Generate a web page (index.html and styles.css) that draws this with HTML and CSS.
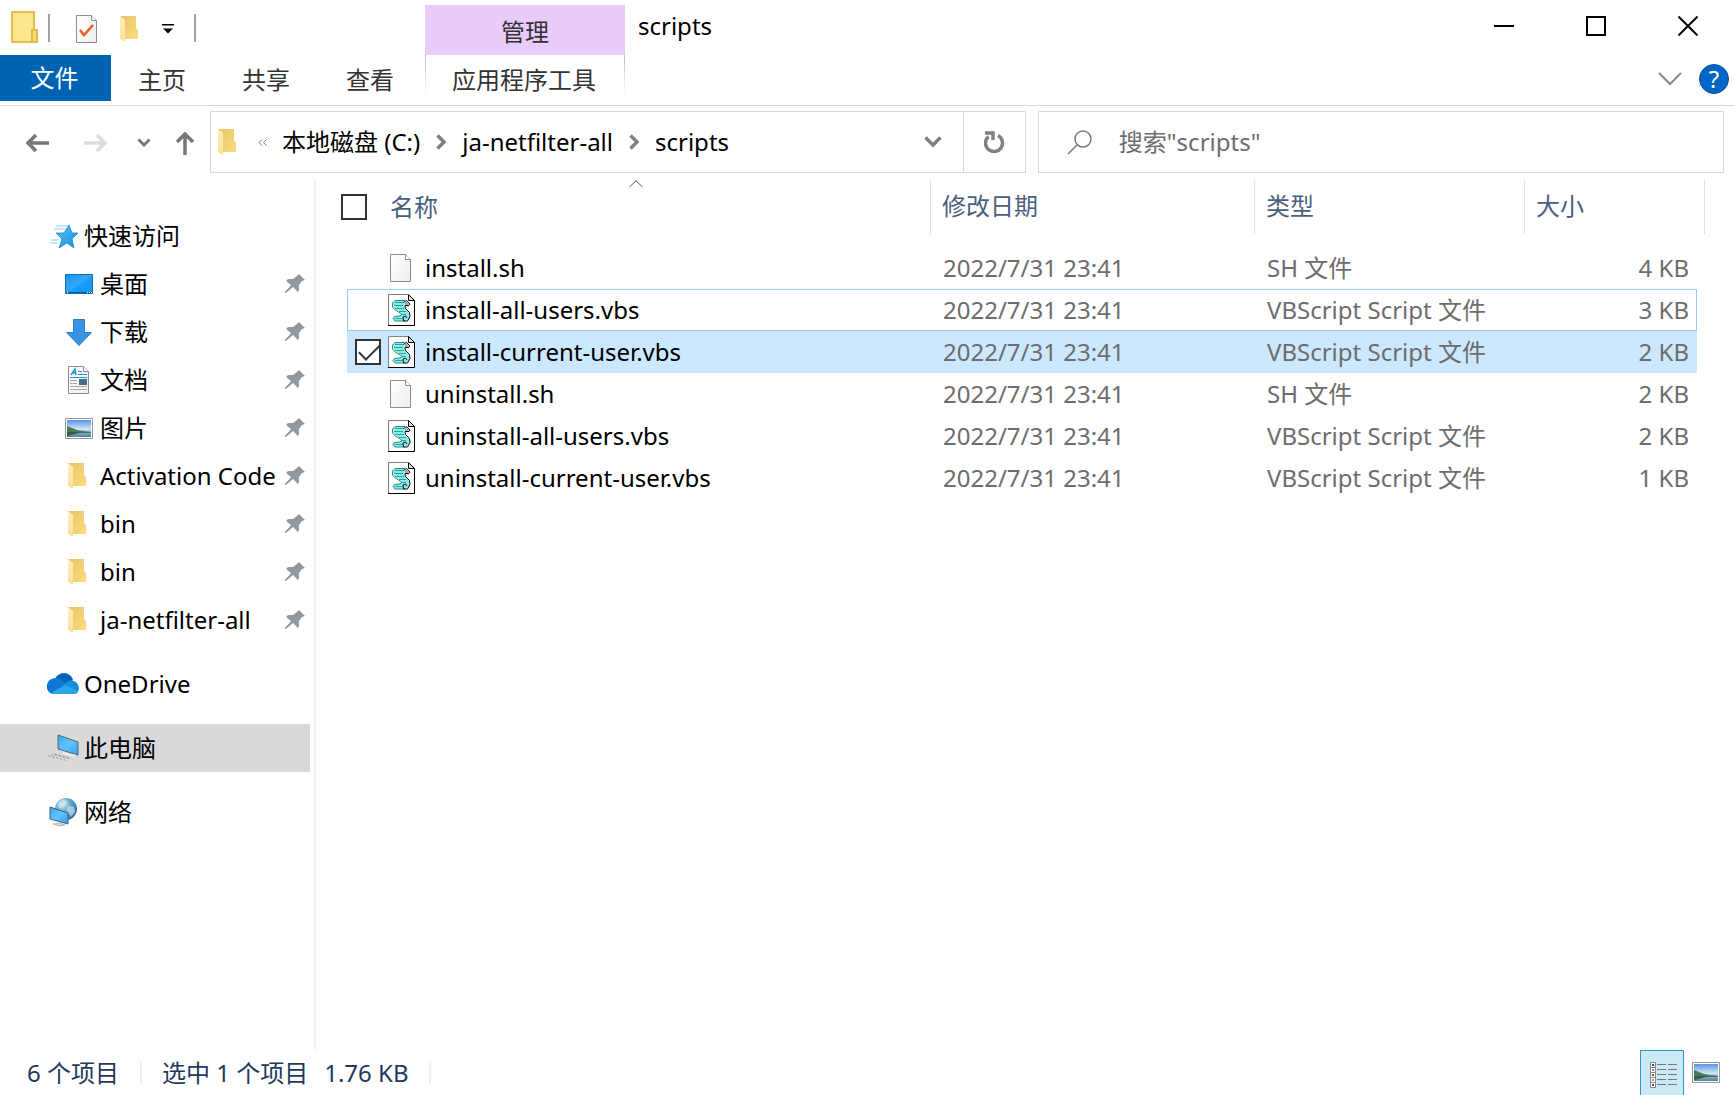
FILE: index.html
```html
<!DOCTYPE html>
<html lang="zh-CN">
<head>
<meta charset="utf-8">
<title>scripts</title>
<link rel="stylesheet" href="styles.css">
</head>
<body>
<svg class="defs" width="0" height="0" aria-hidden="true">
  <defs>
    <linearGradient id="g-back" x1="0" y1="0" x2="1" y2="1"><stop offset="0" stop-color="#e8c468"/><stop offset="1" stop-color="#fbdc80"/></linearGradient>
    <linearGradient id="g-front" x1="0" y1="0" x2="0" y2="1"><stop offset="0" stop-color="#fff0bd"/><stop offset="1" stop-color="#fbdf94"/></linearGradient>
    <linearGradient id="g-blue" x1="0" y1="0" x2="1" y2="1"><stop offset="0" stop-color="#1794ef"/><stop offset=".5" stop-color="#35a8f8"/><stop offset=".52" stop-color="#1a9dfb"/><stop offset="1" stop-color="#1593ee"/></linearGradient>
    <linearGradient id="g-screen" x1="0" y1="0" x2="1" y2="1"><stop offset="0" stop-color="#36a7f5"/><stop offset=".5" stop-color="#64c3ff"/><stop offset="1" stop-color="#2aa0f5"/></linearGradient>
    <linearGradient id="g-star" x1="0" y1="0" x2="1" y2="1"><stop offset="0" stop-color="#56c4ff"/><stop offset="1" stop-color="#168ce0"/></linearGradient>
    <linearGradient id="g-sky" x1="0" y1="0" x2="0" y2="1"><stop offset="0" stop-color="#5b93e4"/><stop offset=".55" stop-color="#cfe6fb"/><stop offset=".7" stop-color="#8fb5cc"/><stop offset="1" stop-color="#517f9d"/></linearGradient>
    <radialGradient id="g-globe" cx=".35" cy=".3" r=".8"><stop offset="0" stop-color="#c4e4f0"/><stop offset=".5" stop-color="#5ba3c6"/><stop offset="1" stop-color="#1f6488"/></radialGradient>
    <linearGradient id="g-page" x1="0" y1="0" x2="1" y2="1"><stop offset="0" stop-color="#fff"/><stop offset="1" stop-color="#eee"/></linearGradient>
  </defs>
  <symbol id="i-folder" viewBox="0 0 20 28">
    <path d="M1 1h16v12l2 2v9H6z" fill="url(#g-back)"/>
    <path d="M1 1l5 4v22l-5-3z" fill="url(#g-front)"/>
  </symbol>
  <symbol id="i-pin" viewBox="0 0 20 20">
    <path d="M14 0l6 6-3 1-3 4v5l-1 2-5-5-7 6H0v-1l6-7-5-4 2-2h5l4-3z" fill="#919b9f"/>
  </symbol>
  <symbol id="i-picture" viewBox="0 0 28 21">
    <path d="M.5.500h27v20H.5z" fill="#fff" stroke="#8f9599"/>
    <path d="M2 2h24v17H2z" fill="url(#g-sky)"/>
    <path d="M2 8l5 2 5 2 6 1 8 1v1H2z" fill="#477a55"/>
    <path d="M2 14h15l-7 2-8 2z" fill="#315f4d"/>
  </symbol>
  <symbol id="i-file" viewBox="0 0 21 28">
    <path d="M.5.500h15l5 5v22H.5z" fill="url(#g-page)" stroke="#8d8d8d"/>
    <path d="M15.500.500v5h5" fill="#fff" stroke="#8d8d8d"/>
  </symbol>
  <symbol id="i-vbs" viewBox="0 0 27 32">
    <path d="M.5.500h20l6 6v25H.5z" fill="#fff"/>
    <path d="M.5 31V.500h20" fill="none" stroke="#808080"/>
    <path d="M0 31.500h26.500V6" fill="none" stroke="#000"/>
    <path d="M20.500.500v6h6z" fill="#ddd" stroke="#000"/>
    <path d="M7 6h11l-2 3 1 5 5 5 0 5-4 3H8l-3-2 1-3h6l3-2-9-6-1-5z" fill="#8eeae6"/>
    <path d="M7 8.500h9M6 11.500h9M7 14.500h9M11 17.500h7M14 20.500h4M7 24.500h8" fill="none" stroke="#27a5a1"/>
    <path d="M17 6.500H7L4.500 9v4l2 2.500 8 5-3 1.500-5 .5-1.500 2 2 2.500h10" fill="none" stroke="#238f8c"/>
    <path d="M15.500 8.500l3-2 3.500 3.500-1 1.500h-4l.5 3 4 4 .5 4-2.500 4.500h-4l-.5-4 2.500-1 1.500 2" fill="none" stroke="#111"/>
    <path d="M16.500 9l2-2 2.500 3-1 1h-3z" fill="#aaa"/>
  </symbol>
</svg>

<div class="window">
  <header class="titlebar">
    <div class="quick">
      <svg class="app" width="28" height="34" viewBox="0 0 28 34"><path d="M2 1h22v30H2z" fill="#ffe68c" stroke="#e3bf4f" stroke-width="2"/><path d="M22 19h5v12h-5z" fill="#fadb73" stroke="#ddb94e" stroke-width="2"/></svg>
      <span class="bar"></span>
      <button class="props" aria-label="属性"><svg width="21" height="28"><use href="#i-file"/><path d="M4 15l4 5 9-10" fill="none" stroke="#e65f1c" stroke-width="2.500"/></svg></button>
      <button class="newdir" aria-label="新建文件夹"><svg width="20" height="28"><use href="#i-folder"/></svg></button>
      <button class="more" aria-label="自定义快速访问工具栏"><svg width="12" height="10" viewBox="0 0 12 10"><path d="M0 0h12v1.500H0zM1 4.500h10L6 9.500z"/></svg></button>
      <span class="bar"></span>
    </div>
    <div class="context">管理</div>
    <h1>scripts</h1>
    <div class="caption">
      <button aria-label="最小化"><svg width="20" height="20"><path d="M0 10h20" stroke="#000" stroke-width="2"/></svg></button>
      <button aria-label="最大化"><svg width="20" height="20"><path d="M1 1h18v18H1z" fill="none" stroke="#000" stroke-width="2"/></svg></button>
      <button aria-label="关闭"><svg width="20" height="20"><path d="M.5.500l19 19M19.500.500l-19 19" stroke="#000" stroke-width="2"/></svg></button>
    </div>
  </header>

  <nav class="ribbon">
    <button class="file">文件</button>
    <button>主页</button>
    <button>共享</button>
    <button>查看</button>
    <button class="tools">应用程序工具</button>
    <div class="ribbon-end">
      <button aria-label="展开功能区"><svg width="24" height="14"><path d="M1 1l11 11L23 1" fill="none" stroke="#8a8a8a" stroke-width="2"/></svg></button>
      <button class="help" aria-label="帮助">?</button>
    </div>
  </nav>

  <div class="navbar">
    <div class="history">
      <button class="back" aria-label="返回"><svg width="23" height="20"><path d="M10 2l-8 8 8 8M2 10h21" fill="none" stroke="#777" stroke-width="3.500"/></svg></button>
      <button class="fwd" aria-label="前进"><svg width="23" height="20"><path d="M13 2l8 8-8 8M21 10H0" fill="none" stroke="#ddd" stroke-width="3.500"/></svg></button>
      <button class="recent" aria-label="最近位置"><svg width="14" height="10"><path d="M1.500 1.500L7 7l5.500-5.500" fill="none" stroke="#777" stroke-width="3"/></svg></button>
      <button class="up" aria-label="上移"><svg width="20" height="23"><path d="M2 10l8-8 8 8M10 2v21" fill="none" stroke="#777" stroke-width="3.500"/></svg></button>
    </div>
    <div class="address">
      <svg class="loc" width="20" height="28"><use href="#i-folder"/></svg>
      <button class="over" aria-label="更多位置"><svg width="9" height="7"><path d="M4 .500l-3 3 3 3M8.500.500l-3 3 3 3" fill="none" stroke="#777"/></svg></button>
      <a href="#c">本地磁盘 (C:)</a>
      <svg class="sep" width="10" height="16"><path d="M1.500 1.500L8 8l-6.500 6.500" fill="none" stroke="#808080" stroke-width="3.500"/></svg>
      <a href="#ja">ja-netfilter-all</a>
      <svg class="sep" width="10" height="16"><path d="M1.500 1.500L8 8l-6.500 6.500" fill="none" stroke="#808080" stroke-width="3.500"/></svg>
      <a href="#scripts">scripts</a>
      <button class="drop" aria-label="以前的位置"><svg width="18" height="12"><path d="M1.500 1.500L9 9l7.500-7.500" fill="none" stroke="#808080" stroke-width="3.500"/></svg></button>
      <button class="refresh" aria-label="刷新"><svg width="21" height="22" viewBox="0 0 21 22"><path d="M4.500 5.500A8.500 8.500 0 1 0 14 4.500" fill="none" stroke="#808080" stroke-width="3.500"/><path d="M1 2h8V9" fill="none" stroke="#808080" stroke-width="3.500"/></svg></button>
    </div>
    <label class="search">
      <svg width="25" height="25"><circle cx="16" cy="9" r="8" fill="none" stroke="#777" stroke-width="1.500"/><path d="M10 15l-9 9" stroke="#777" stroke-width="1.500"/></svg>
      <input type="text" placeholder="搜索&quot;scripts&quot;" aria-label="搜索">
    </label>
  </div>

  <main class="body">
    <nav class="tree">
      <a class="root" href="#quick"><svg width="30" height="26" viewBox="-1 0 30 26"><path d="M20 2l3 8h6l-6 6 2 9-7-5-8 5 3-9-6-6h8z" fill="url(#g-star)" stroke="#2587c6" stroke-width=".8"/><path d="M7 3h11M5 6h12M2 17h7M1 20h8" stroke="#8ccbf2"/></svg><span>快速访问</span></a>
      <a class="leaf" href="#desktop"><svg width="28" height="20"><path d="M.5.500h27v19H.5z" fill="url(#g-blue)" stroke="#0d6fb5"/><path d="M1 18.500h26" stroke="#0a5c99"/><path d="M2 18.500h1M22 18.500h1M24 18.500h1M26 18.500h1" stroke="#fff"/></svg><span>桌面</span><svg class="pin" width="20" height="20"><use href="#i-pin"/></svg></a>
      <a class="leaf" href="#downloads"><svg width="28" height="27" viewBox="-1 0 28 27"><path d="M7.500.500h11v13h7L13 26.500.500 13.500h7z" fill="#3794e4" stroke="#2f7cc2"/></svg><span>下载</span><svg class="pin" width="20" height="20"><use href="#i-pin"/></svg></a>
      <a class="leaf" href="#docs"><svg width="28" height="28" viewBox="-3 0 28 28"><use href="#i-file" width="21" height="28"/><path d="M3 9l4-6 1 6M4 7h4" fill="none" stroke="#2f90c7" stroke-width="1.500"/><path d="M10 5.500h4M10 8.500h9M2 11.500h17" stroke="#2f90c7"/><path d="M11 13h8v6h-8z" fill="#426f88"/><path d="M2 14.500h7M2 17.500h7M2 20.500h17M2 23.500h17" stroke="#aaa"/></svg><span>文档</span><svg class="pin" width="20" height="20"><use href="#i-pin"/></svg></a>
      <a class="leaf" href="#pictures"><svg width="28" height="21"><use href="#i-picture"/></svg><span>图片</span><svg class="pin" width="20" height="20"><use href="#i-pin"/></svg></a>
      <a class="leaf dir" href="#code"><svg width="20" height="28"><use href="#i-folder"/></svg><span>Activation Code</span><svg class="pin" width="20" height="20"><use href="#i-pin"/></svg></a>
      <a class="leaf dir" href="#bin1"><svg width="20" height="28"><use href="#i-folder"/></svg><span>bin</span><svg class="pin" width="20" height="20"><use href="#i-pin"/></svg></a>
      <a class="leaf dir" href="#bin2"><svg width="20" height="28"><use href="#i-folder"/></svg><span>bin</span><svg class="pin" width="20" height="20"><use href="#i-pin"/></svg></a>
      <a class="leaf dir" href="#ja-netfilter-all"><svg width="20" height="28"><use href="#i-folder"/></svg><span>ja-netfilter-all</span><svg class="pin" width="20" height="20"><use href="#i-pin"/></svg></a>
      <a class="root" href="#onedrive"><svg width="32" height="22" viewBox="0 0 32 22"><path d="M8 6c4-8 15-8 18 1l-8 5z" fill="#0364b8"/><path d="M8 5c-10 1-11 14-2 16l14-8c-3-5-7-8-12-8z" fill="#0f78d4"/><path d="M18 11c4-6 13-4 14 4 0 3-2 6-5 6H7z" fill="#1490df"/><path d="M4 20l14-8 13 6c-1 2-2 3-4 3H7z" fill="#28a8ea"/></svg><span>OneDrive</span></a>
      <a class="root current" href="#pc"><svg width="32" height="28" viewBox="0 0 32 28"><path d="M11 1l20 7v13l-20-6z" fill="url(#g-screen)" stroke="#5a666d"/><path d="M16 19l9 3 3-1" fill="none" stroke="#eee" stroke-width="2"/><path d="M1 21l6-1 18 4-6 3z" fill="#eee"/><path d="M1 21.500l19 5M4 20.500l18 4.500M7 20l17 4" fill="none" stroke="#999" stroke-dasharray="3 1"/></svg><span>此电脑</span></a>
      <a class="root" href="#network"><svg width="30" height="29" viewBox="0 0 30 29"><circle cx="18" cy="11" r="11" fill="url(#g-globe)"/><path d="M10 5l6-4 4 3-4 5-5 1zM20 8l6 1 1 5-4 5-4-6z" fill="#d7edf3" opacity=".6"/><path d="M2 9l18 6v11L2 21z" fill="url(#g-screen)" stroke="#49606d"/><path d="M5 26l6-1 6 2-6 1z" fill="#ddd" stroke="#888" stroke-width=".5"/></svg><span>网络</span></a>
    </nav>

    <section class="files">
      <svg class="sort" width="14" height="8"><path d="M.5 7L7 .8 13.500 7" fill="none" stroke="#555"/></svg>
      <table>
        <colgroup><col class="c-gut"><col><col class="c-date"><col class="c-type"><col class="c-size"><col class="c-end"></colgroup>
        <thead>
          <tr>
            <th colspan="2"><div class="cell"><input class="all" type="checkbox" aria-label="全选"><span>名称</span></div></th>
            <th>修改日期</th><th>类型</th><th colspan="2">大小</th>
          </tr>
        </thead>
        <tbody>
          <tr><td></td><td><div class="cell"><span class="box"></span><span class="ico"><svg width="21" height="28"><use href="#i-file"/></svg></span>install.sh</div></td><td>2022/7/31 23:41</td><td>SH 文件</td><td>4 KB</td><td></td></tr>
          <tr class="focus"><td></td><td><div class="cell"><span class="box"></span><span class="ico"><svg width="27" height="32"><use href="#i-vbs"/></svg></span>install-all-users.vbs</div></td><td>2022/7/31 23:41</td><td>VBScript Script 文件</td><td>3 KB</td><td></td></tr>
          <tr class="selected"><td></td><td><div class="cell"><span class="box"><input type="checkbox" checked aria-label="install-current-user.vbs"></span><span class="ico"><svg width="27" height="32"><use href="#i-vbs"/></svg></span>install-current-user.vbs</div></td><td>2022/7/31 23:41</td><td>VBScript Script 文件</td><td>2 KB</td><td></td></tr>
          <tr><td></td><td><div class="cell"><span class="box"></span><span class="ico"><svg width="21" height="28"><use href="#i-file"/></svg></span>uninstall.sh</div></td><td>2022/7/31 23:41</td><td>SH 文件</td><td>2 KB</td><td></td></tr>
          <tr><td></td><td><div class="cell"><span class="box"></span><span class="ico"><svg width="27" height="32"><use href="#i-vbs"/></svg></span>uninstall-all-users.vbs</div></td><td>2022/7/31 23:41</td><td>VBScript Script 文件</td><td>2 KB</td><td></td></tr>
          <tr><td></td><td><div class="cell"><span class="box"></span><span class="ico"><svg width="27" height="32"><use href="#i-vbs"/></svg></span>uninstall-current-user.vbs</div></td><td>2022/7/31 23:41</td><td>VBScript Script 文件</td><td>1 KB</td><td></td></tr>
        </tbody>
      </table>
    </section>
  </main>

  <footer class="status">
    <span class="count">6 个项目</span>
    <span class="picked"><span>选中 1 个项目</span><span>1.76 KB</span></span>
    <div class="views">
      <button class="details" aria-label="详细信息"><svg width="28" height="26" viewBox="0 0 28 26"><path d="M.5.500h5v25h-5zM.5 5.500h5M.5 10.500h5M.5 15.500h5M.5 20.500h5" fill="#fff" stroke="#888"/><path d="M2 3h2M2 23h2" stroke="#357"  stroke-width="2"/><path d="M2 8h2M2 18h2" stroke="#8a9a60" stroke-width="2"/><path d="M2 13h2" stroke="#b33" stroke-width="2"/><path d="M7 2.500h9M18 2.500h9M7 7.500h9M18 7.500h9M7 12.500h9M18 12.500h9M7 17.500h9M18 17.500h9M7 22.500h9M18 22.500h9" stroke="#777"/></svg></button>
      <button class="large" aria-label="大图标"><svg width="28" height="21"><use href="#i-picture"/></svg></button>
    </div>
  </footer>
</div>
</body>
</html>
```
FILE: styles.css
```css
* { box-sizing: border-box; }

body {
  margin: 0;
  background: #fff;
  color: #000;
  font: 24px/32px "Noto Sans", "Noto Sans CJK SC", sans-serif;
}

svg { display: block; flex: none; }
.defs { position: absolute; }

button, input { font: inherit; color: inherit; }

button {
  display: flex;
  align-items: center;
  justify-content: center;
  padding: 0;
  border: 0;
  background: none;
}

a { color: inherit; text-decoration: none; }

.window {
  display: flex;
  flex-direction: column;
  min-height: 100vh;
}

/* Title bar */
.titlebar { display: flex; height: 55px; }

.quick {
  display: flex;
  align-items: center;
  flex: none;
  width: 425px;
  padding-left: 10px;
}

.bar { width: 2px; height: 28px; background: #a0a0a0; }
.app { margin-right: 10px; }
.quick button { padding-top: 3px; }
.props { margin-left: 26px; }
.newdir { margin-left: 22px; }
.more { margin: 0 20px 0 23px; }

.context {
  width: 200px;
  margin-top: 5px;
  padding-top: 11px;
  background: #e9cbfc;
  color: #333;
  text-align: center;
}

h1 {
  margin: 10px 0 0 13px;
  font-size: 24px;
  font-weight: 400;
}

.caption { display: flex; margin-left: auto; }
.caption button { width: 92px; height: 52px; }

/* Ribbon tabs */
.ribbon {
  display: flex;
  height: 51px;
  border-bottom: 1px solid #d9d9d9;
  color: #333;
}

.ribbon > button { width: 104px; height: 50px; padding-right: 2px; }
.ribbon > .file { width: 111px; height: 46px; background: #0063b1; color: #fff; }

.ribbon > .tools {
  width: 200px;
  margin-left: 2px;
  background:
    linear-gradient(#bbb, #fff) left top / 1px 40px no-repeat,
    linear-gradient(#bbb, #fff) right top / 1px 40px no-repeat;
}

.ribbon-end {
  display: flex;
  align-items: center;
  gap: 17px;
  margin-left: auto;
  padding: 0 5px 2px 0;
}

.help {
  width: 30px;
  height: 30px;
  border: 1px solid #0a4f94;
  border-radius: 50%;
  background: #0067c8;
  color: #fff;
}

/* Navigation bar */
.navbar { display: flex; height: 74px; padding: 5px 10px 7px 0; }

.history {
  display: flex;
  align-items: center;
  flex: none;
  width: 210px;
  padding: 2px 0 0 26px;
}

.fwd { margin-left: 35px; }
.recent { margin-left: 30px; }
.up { margin-left: 24px; }

.address, .search {
  display: flex;
  align-items: center;
  min-width: 0;
  border: 1px solid #d9d9d9;
  white-space: nowrap;
}

.address { flex: 816 1 0; margin-right: 12px; }
.loc { margin-left: 6px; }
.over { margin: 0 15px 0 21px; }
.sep { margin: 0 16px; }
.drop { width: 60px; height: 100%; margin-left: auto; }
.refresh { width: 62px; height: 100%; border-left: 1px solid #d9d9d9; }

.search { flex: 686 1 0; }
.search svg { margin-left: 28px; }

.search input {
  flex: 1;
  min-width: 0;
  margin-left: 27px;
  padding: 0;
  border: 0;
  outline: 0;
}

.search input::placeholder { color: #6d6d6d; opacity: 1; }

/* Main area */
.body { display: flex; flex: 1; }

.tree {
  flex: none;
  width: 316px;
  padding: 32px 4px 0 0;
  border-right: 2px solid #f3f3f3;
}

.tree a { display: flex; align-items: center; height: 48px; white-space: nowrap; }
.tree .root { padding-left: 47px; }
.tree .root svg { width: 32px; margin-right: 5px; }
.tree .root ~ .root { margin-top: 16px; }
.tree .leaf { padding-left: 65px; }
.tree .leaf span { flex: 1; }
.tree .leaf svg:first-child { width: 28px; margin-right: 7px; }
.tree .dir svg:first-child { width: 24px; margin-right: 11px; }
.tree .pin { margin-right: 5px; }
.tree .current { background: #d9d9d9; }

.files { position: relative; flex: 1; padding: 0 29px 0 25px; }

/* Sort arrow sits over the middle of the name column */
.sort { position: absolute; top: 0; left: 313px; }

table {
  width: 100%;
  table-layout: fixed;
  border-collapse: separate;
  border-spacing: 0;
}

.c-gut { width: 6px; }
.c-date { width: 324px; }
.c-type { width: 270px; }
.c-size { width: 172px; }
.c-end { width: 8px; }

th {
  height: 54px;
  padding: 0 0 2px 11px;
  border-right: 1px solid #e2e2e2;
  color: #4a5f7e;
  font-weight: 400;
  text-align: left;
}

th:first-child { padding: 0; }
tbody::before { content: ""; display: table-row; height: 13px; }

td { height: 42px; padding: 0; color: #6d6d6d; white-space: nowrap; }
td:nth-child(2) { color: #000; }
td:nth-child(3), td:nth-child(4) { padding-left: 12px; }
td:nth-child(5) { padding-right: 8px; text-align: right; }

.cell { display: flex; align-items: center; }
.box { width: 41px; padding-left: 8px; }
.ico { width: 37px; }
.ico svg[width="21"] { margin-left: 2px; }

input[type="checkbox"] {
  appearance: none;
  display: block;
  width: 26px;
  height: 26px;
  margin: 0;
  border: 2px solid #333;
  background: #fff;
}

.all + span { margin-left: 23px; }

input[type="checkbox"]:checked::after {
  content: "";
  display: block;
  width: 19px;
  height: 9px;
  margin: 3px 0 0 2px;
  border: solid #333;
  border-width: 0 0 2px 2px;
  transform: rotate(-45deg);
}

.focus td:not(:first-child):not(:last-child) {
  border-top: 1px solid #99d1ff;
  border-bottom: 1px solid #99c9ef;
}

.focus td:nth-child(2) { box-shadow: inset 1px 0 #99c9ef; }
.focus td:nth-child(5) { box-shadow: inset -1px 0 #99c9ef; }
.selected td:not(:first-child):not(:last-child) { background: #cce8ff; }

/* Status bar */
.status {
  display: flex;
  align-items: center;
  height: 45px;
  color: #1e395b;
}

.count, .picked { border-right: 2px solid #f0f0f0; line-height: 22px; }
.count { padding: 0 21px 0 27px; }
.picked { display: flex; gap: 16px; padding: 0 20px; }

.views { display: flex; align-self: stretch; margin-left: auto; padding-right: 6px; }
.views button { width: 44px; }
.views .details { padding: 3px 0 0 3px; border: 1px solid #2f9cc4; border-bottom: 0; background: #cbe8f6; }
```
